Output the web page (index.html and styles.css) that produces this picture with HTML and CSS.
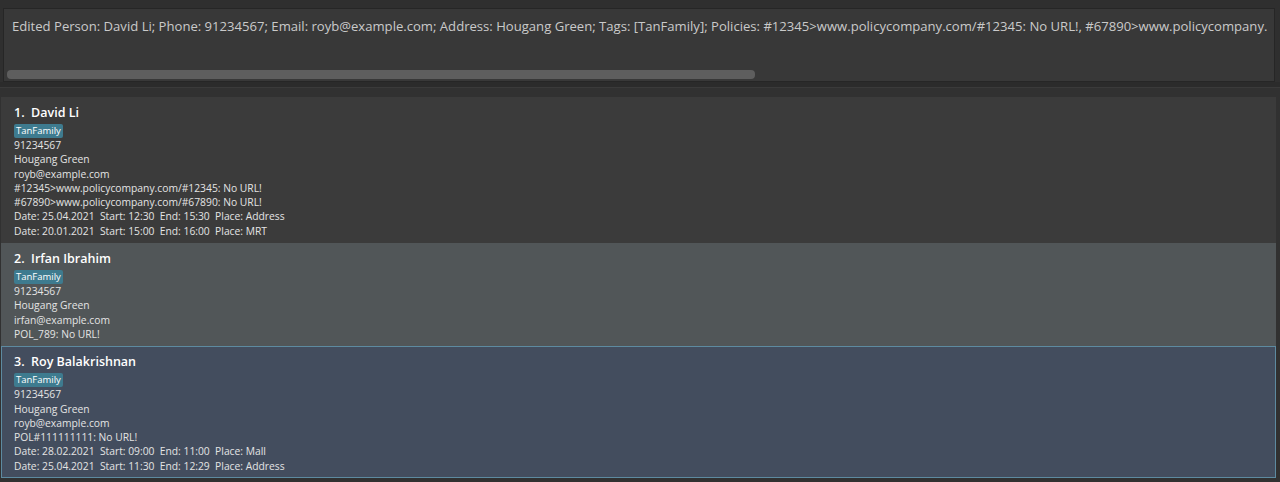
FILE: index.html
```html
<!DOCTYPE html>
<html lang="en">
<head>
<meta charset="utf-8">
<title>Address Book</title>
<link rel="stylesheet" href="styles.css">
</head>
<body>
<div class="app">
  <div class="top">
    <div class="result">
      <div class="result-text">Edited Person: David Li; Phone: 91234567; Email: royb@example.com; Address: Hougang Green; Tags: [TanFamily]; Policies: #12345&gt;www.policycompany.com/#12345: No URL!, #67890&gt;www.policycompany.</div>
      <div class="hscroll"><div class="thumb"></div></div>
    </div>
  </div>
  <div class="divider"></div>
  <div class="list">
    <div class="card">
      <div class="name">1.&nbsp; David Li</div>
      <div class="tags"><span class="tag">TanFamily</span></div>
      <div class="line">91234567</div>
      <div class="line">Hougang Green</div>
      <div class="line">royb@example.com</div>
      <div class="line">#12345&gt;www.policycompany.com/#12345: No URL!</div>
      <div class="line">#67890&gt;www.policycompany.com/#67890: No URL!</div>
      <div class="line">Date: 25.04.2021  Start: 12:30  End: 15:30  Place: Address</div>
      <div class="line">Date: 20.01.2021  Start: 15:00  End: 16:00  Place: MRT</div>
    </div>
    <div class="card card-alt">
      <div class="name">2.&nbsp; Irfan Ibrahim</div>
      <div class="tags"><span class="tag">TanFamily</span></div>
      <div class="line">91234567</div>
      <div class="line">Hougang Green</div>
      <div class="line">irfan@example.com</div>
      <div class="line">POL_789: No URL!</div>
    </div>
    <div class="card card-selected">
      <div class="name">3.&nbsp; Roy Balakrishnan</div>
      <div class="tags"><span class="tag">TanFamily</span></div>
      <div class="line">91234567</div>
      <div class="line">Hougang Green</div>
      <div class="line">royb@example.com</div>
      <div class="line">POL#111111111: No URL!</div>
      <div class="line">Date: 28.02.2021  Start: 09:00  End: 11:00  Place: Mall</div>
      <div class="line">Date: 25.04.2021  Start: 11:30  End: 12:29  Place: Address</div>
    </div>
  </div>
</div>
</body>
</html>
```
FILE: styles.css
```css
* { box-sizing: border-box; }
html, body { margin: 0; padding: 0; }
body {
  background: #2e2e2e;
  font-family: "Open Sans", "Noto Sans", sans-serif;
  color: #e0e0e0;
}
.app {
  width: 1280px;
  height: 482px;
  overflow: hidden;
  background: #303030;
  display: flex;
  flex-direction: column;
}
.top {
  padding: 8px 5px 0 3px;
  background: #2f2f2f;
}
.result {
  height: 74px;
  border: 1px solid #262626;
  background: #383838;
  display: flex;
  flex-direction: column;
  overflow: hidden;
}
.result-text {
  padding: 8px 0 0 8px;
  font-size: 13.1px;
  line-height: 18px;
  color: #cacaca;
  white-space: nowrap;
  overflow: hidden;
  flex: 1;
}
.hscroll {
  height: 12px;
  padding: 1px 3px 2px 3px;
}
.thumb {
  width: 748px;
  height: 9px;
  background: #5e5e5e;
  border-radius: 4px;
}
.divider {
  height: 6px;
  border-bottom: 1px solid #3a3a3a;
  background: #2b2b2b;
}
.list {
  padding: 9px 4px 0 1px;
  background: #313131;
  flex: 1;
}
.card {
  background: #3b3b3b;
  padding: 5px 12px 4px;
  border: 1px solid transparent;
}
.card-alt {
  background: #515658;
}
.card-selected {
  background: #434d5e;
  border-color: #5d8aa0;
}
.name {
  font-size: 12.5px;
  font-weight: 600;
  line-height: 20px;
  color: #ffffff;
}
.tags {
  display: flex;
  margin-top: 1px;
  height: 14px;
}
.tag {
  background: #3e7b8f;
  color: #ffffff;
  font-size: 9.5px;
  line-height: 14px;
  padding: 0 2px;
  border-radius: 2px;
}
.line {
  font-size: 10.3px;
  line-height: 14.3px;
  white-space: pre;
  color: #e4e4e4;
}
```
